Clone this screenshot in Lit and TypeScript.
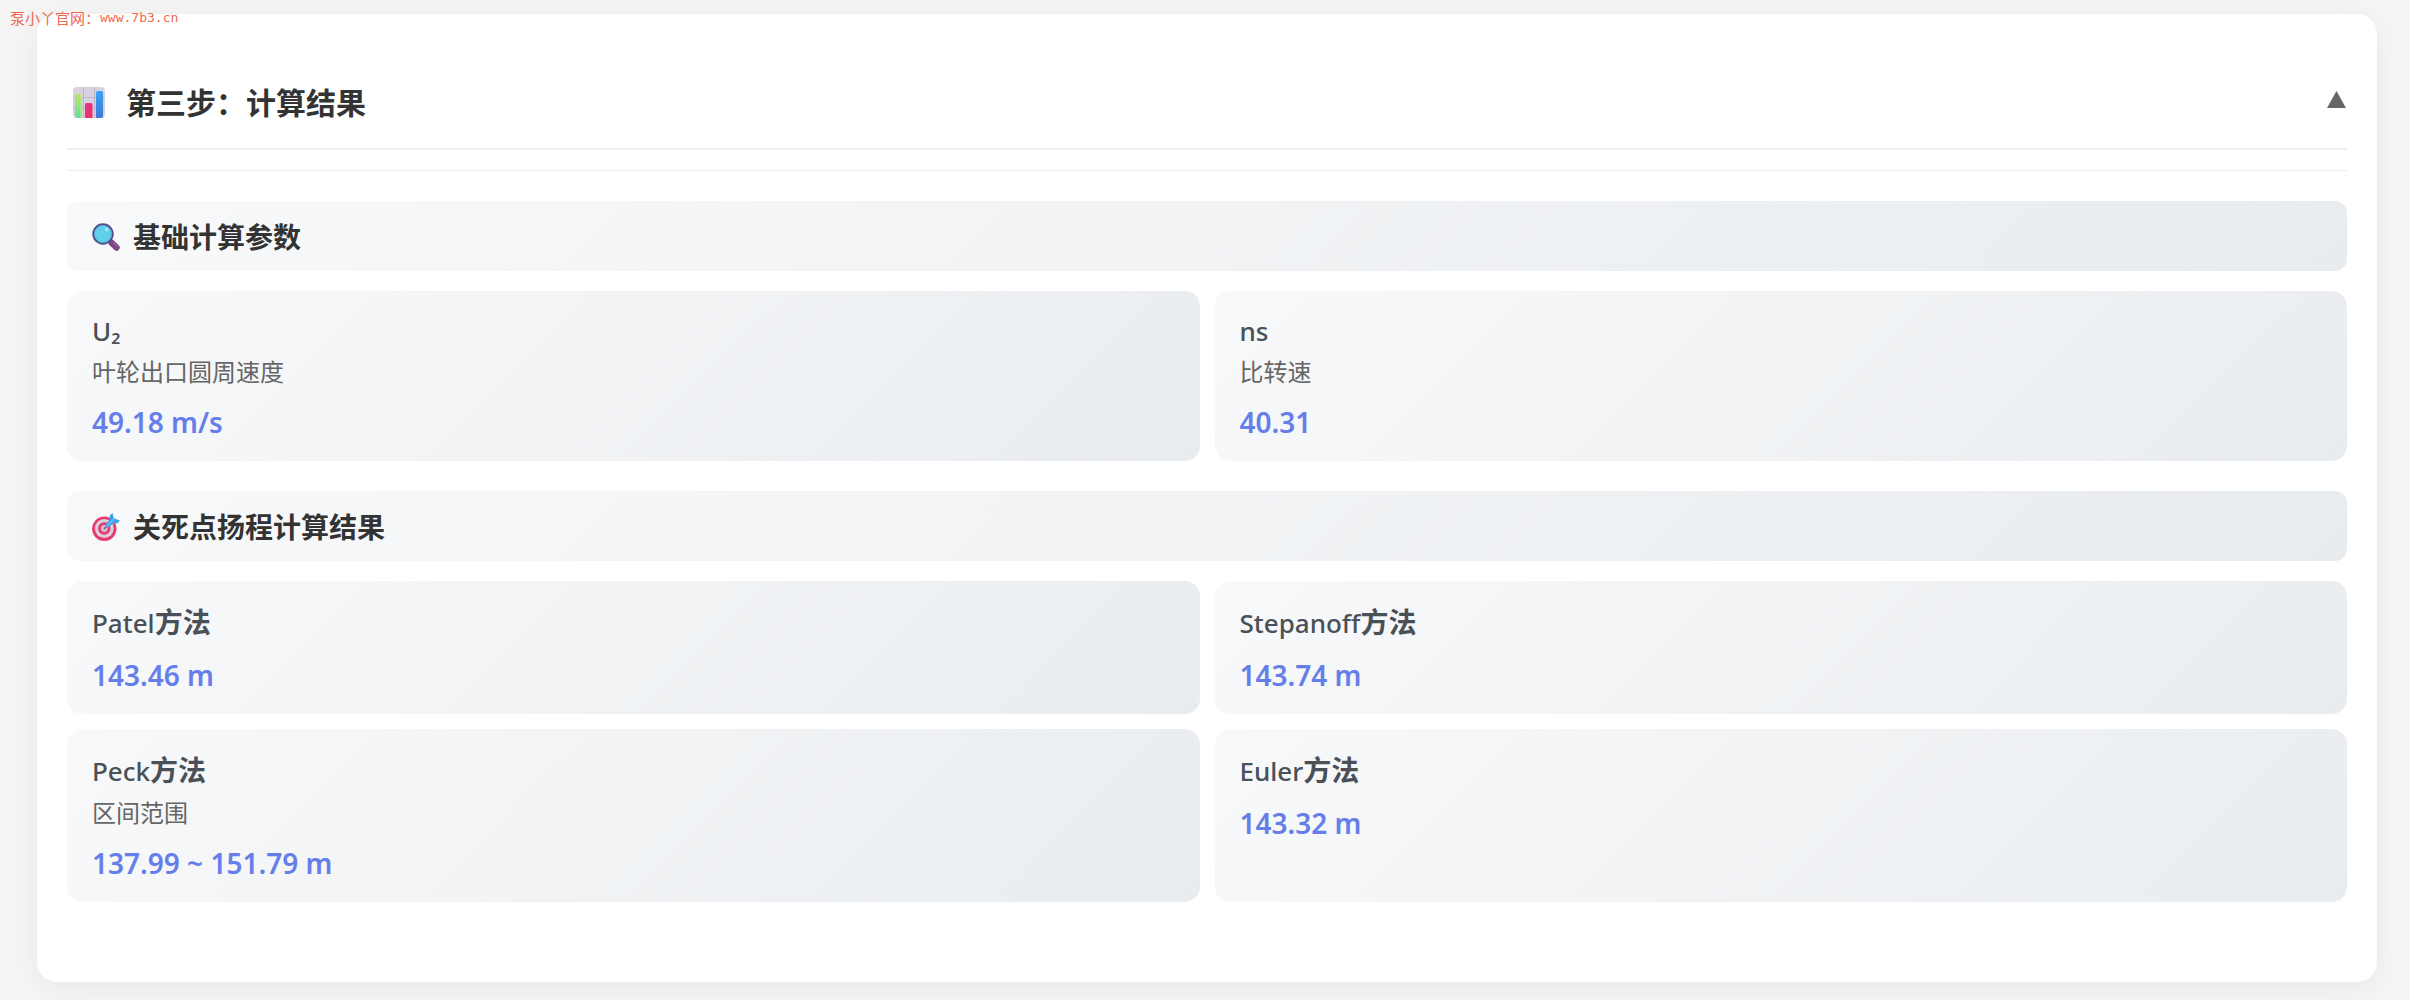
import { LitElement, html, css, svg, nothing } from "lit";
import { customElement, state } from "lit/decorators.js";

interface Result {
  name: string;
  suffix?: string;
  note?: string;
  value: string;
}

interface Section {
  title: string;
  icon: unknown;
  items: Result[];
}

const chartIcon = svg`
  <svg class="icon icon-lg" viewBox="0 0 32 32" aria-hidden="true">
    <defs>
      <linearGradient id="g" x1="0" y1="0" x2="0" y2="1"><stop offset="0" stop-color="#b9e661"/><stop offset="1" stop-color="#5fe09a"/></linearGradient>
      <linearGradient id="r" x1="0" y1="0" x2="0" y2="1"><stop offset="0" stop-color="#e0348a"/><stop offset="1" stop-color="#f0305f"/></linearGradient>
      <linearGradient id="b" x1="0" y1="0" x2="0" y2="1"><stop offset="0" stop-color="#35a5f8"/><stop offset="1" stop-color="#3f78cf"/></linearGradient>
    </defs>
    <rect width="32" height="31" rx="4" fill="#d8d1e0"/>
    <path d="M10.500 0v31M21.500 0v31M0 10.500h32M0 21h32" stroke="#bdb5c8" stroke-width="1"/>
    <path d="M2 8.500q0-1.500 1.500-1.500h4q1.500 0 1.500 1.500V31H4q-2 0-2-2z" fill="url(#g)"/>
    <path d="M8 8v23" stroke="#c2f078" stroke-width="1"/>
    <path d="M12 17.500q0-1.500 1.500-1.500h4.500q1.500 0 1.500 1.500V31H12z" fill="url(#r)"/>
    <path d="M23 5.500Q23 4 24.500 4h4Q30 4 30 5.500V29q0 2-2 2h-5z" fill="url(#b)"/>
  </svg>`;

const searchIcon = svg`
  <svg class="icon" viewBox="0 0 28 28" aria-hidden="true">
    <path d="M18 18l2.500 2.500" stroke="#6a4a80" stroke-width="2.500"/>
    <path d="M19.800 20l4.700 4.500" stroke="#7d4583" stroke-width="6.400" stroke-linecap="round"/>
    <path d="M21.500 19.500l4 4" stroke="#985a9c" stroke-width="1.600" stroke-linecap="round"/>
    <circle cx="11" cy="11" r="9.800" fill="#62cfea" stroke="#54498a" stroke-width="1.800"/>
    <circle cx="11" cy="11" r="8.600" fill="none" stroke="#4a9fd0" stroke-width="0.800"/>
    <ellipse cx="14.600" cy="6.600" rx="2" ry="1.500" transform="rotate(35 14.600 6.600)" fill="#a8e6f6"/>
  </svg>`;

const targetIcon = svg`
  <svg class="icon" viewBox="0 0 28 28" aria-hidden="true">
    <circle cx="12.300" cy="15.800" r="12.200" fill="#e63b6b"/>
    <circle cx="12.300" cy="15.500" r="9.400" fill="#dccfe2"/>
    <circle cx="12.300" cy="15.500" r="6.200" fill="#e63b6b"/>
    <circle cx="12.300" cy="15.500" r="3.400" fill="#d5bfd5"/>
    <path d="M12.500 15.500l4-4" stroke="#8d6d9c" stroke-width="1.800" stroke-linecap="round"/>
    <path d="M13.800 10.800L17.500 7 17.800 2.500 20.500 0l1.300 5.300L27.800 7.500 25.500 10.200 20.800 10.500 17 14.300q-2.500 0-3.200-3.500z" fill="#3d9def"/>
    <path d="M15 13l7-7" stroke="#66bdf8" stroke-width="1.800"/>
  </svg>`;

const sections: Section[] = [
  {
    title: "基础计算参数",
    icon: searchIcon,
    items: [
      { name: "U₂", note: "叶轮出口圆周速度", value: "49.18 m/s" },
      { name: "ns", note: "比转速", value: "40.31" },
    ],
  },
  {
    title: "关死点扬程计算结果",
    icon: targetIcon,
    items: [
      { name: "Patel", suffix: "方法", value: "143.46 m" },
      { name: "Stepanoff", suffix: "方法", value: "143.74 m" },
      { name: "Peck", suffix: "方法", note: "区间范围", value: "137.99 ~ 151.79 m" },
      { name: "Euler", suffix: "方法", value: "143.32 m" },
    ],
  },
];

@customElement("app-root")
export class AppRoot extends LitElement {
  @state() private open = true;

  static styles = css`
    :host {
      display: block;
      position: relative;
      box-sizing: border-box;
      min-height: 100vh;
      padding: 14px 33px 18px 37px;
      background: #f5f5f5;
      color: #333;
      font-family: "Noto Sans", "Noto Sans CJK SC", sans-serif;
    }
    * { box-sizing: border-box; }
    h2, h3, p { margin: 0; }
    .watermark {
      position: absolute;
      top: 8px;
      left: 10px;
      display: flex;
      align-items: center;
      color: #ee6a50;
      font: 13px/20px "DejaVu Sans Mono", monospace;
    }
    .site { font-size: 15px; font-weight: 400; font-family: "Noto Sans CJK SC", sans-serif; }
    .panel {
      padding: 30px 30px 80px;
      border-radius: 20px;
      background: #fff;
      box-shadow: 0 6px 30px rgba(0, 0, 0, 0.06);
    }
    .toggle {
      display: flex;
      align-items: center;
      width: 100%;
      padding: 39px 1px 28px 6px;
      border: 0;
      border-bottom: 2px solid #eee;
      background: none;
      color: inherit;
      font: 700 30px/37px "Noto Sans CJK SC", sans-serif;
      text-align: left;
      cursor: pointer;
    }
    .toggle-title { flex: 1; padding-left: 21px; }
    .arrow { width: 19px; height: 17px; margin-bottom: 4px; fill: #666; }
    .arrow.closed { transform: rotate(180deg); }
    .icon { display: block; flex: none; width: 28px; height: 28px; margin-top: 2px; }
    .icon-lg { width: 32px; height: 32px; }
    .body {
      display: flex;
      flex-direction: column;
      gap: 30px;
      margin-top: 20px;
      padding-top: 30px;
      border-top: 1px solid #eee;
    }
    .section-head {
      display: flex;
      align-items: center;
      gap: 13px;
      margin-bottom: 20px;
      padding: 15px 25px;
      border-radius: 12px;
      background: linear-gradient(135deg, #f8f9fa, #e9ecef);
      font: 700 28px/40px "Noto Sans CJK SC", sans-serif;
    }
    .grid {
      display: grid;
      grid-template-columns: repeat(2, minmax(0, 1fr));
      gap: 15px;
    }
    .card {
      padding: 22px 25px;
      border-radius: 15px;
      background: linear-gradient(135deg, #f8f9fa, #e9ecef);
    }
    .label { color: #495057; font-size: 26px; font-weight: 500; line-height: 37px; }
    .label.method { line-height: 40px; }
    .suffix { font-family: "Noto Sans CJK SC", sans-serif; font-size: 28px; font-weight: 700; line-height: 1; }
    .note { margin: 3px 0 17px; color: #666; font-family: "Noto Sans CJK SC", sans-serif; font-size: 24px; line-height: 35px; }
    .value { margin-top: 15px; color: #667eea; font-size: 28px; font-weight: 600; line-height: 34px; }
  `;

  private renderCard(r: Result) {
    return html`
      <article class="card">
        <p class="label ${r.suffix ? "method" : ""}">${r.name}${r.suffix ? html`<span class="suffix">${r.suffix}</span>` : nothing}</p>
        ${r.note ? html`<p class="note">${r.note}</p>` : nothing}
        <p class="value">${r.value}</p>
      </article>`;
  }

  render() {
    return html`
      <main class="panel">
        <h2>
          <button class="toggle" aria-expanded=${this.open} @click=${() => (this.open = !this.open)}>
            ${chartIcon}
            <span class="toggle-title">第三步：计算结果</span>
            <svg class="arrow ${this.open ? "" : "closed"}" viewBox="0 0 19 17" aria-hidden="true"><path d="M9.500 0L19 17H0z"/></svg>
          </button>
        </h2>
        ${this.open
          ? html`<div class="body">
              ${sections.map(
                (s) => html`
                  <section>
                    <h3 class="section-head">${s.icon}<span>${s.title}</span></h3>
                    <div class="grid">${s.items.map((r) => this.renderCard(r))}</div>
                  </section>`
              )}
            </div>`
          : nothing}
      </main>
      <div class="watermark"><span class="site">泵小丫官网：</span><span>www.7b3.cn</span></div>
    `;
  }
}
